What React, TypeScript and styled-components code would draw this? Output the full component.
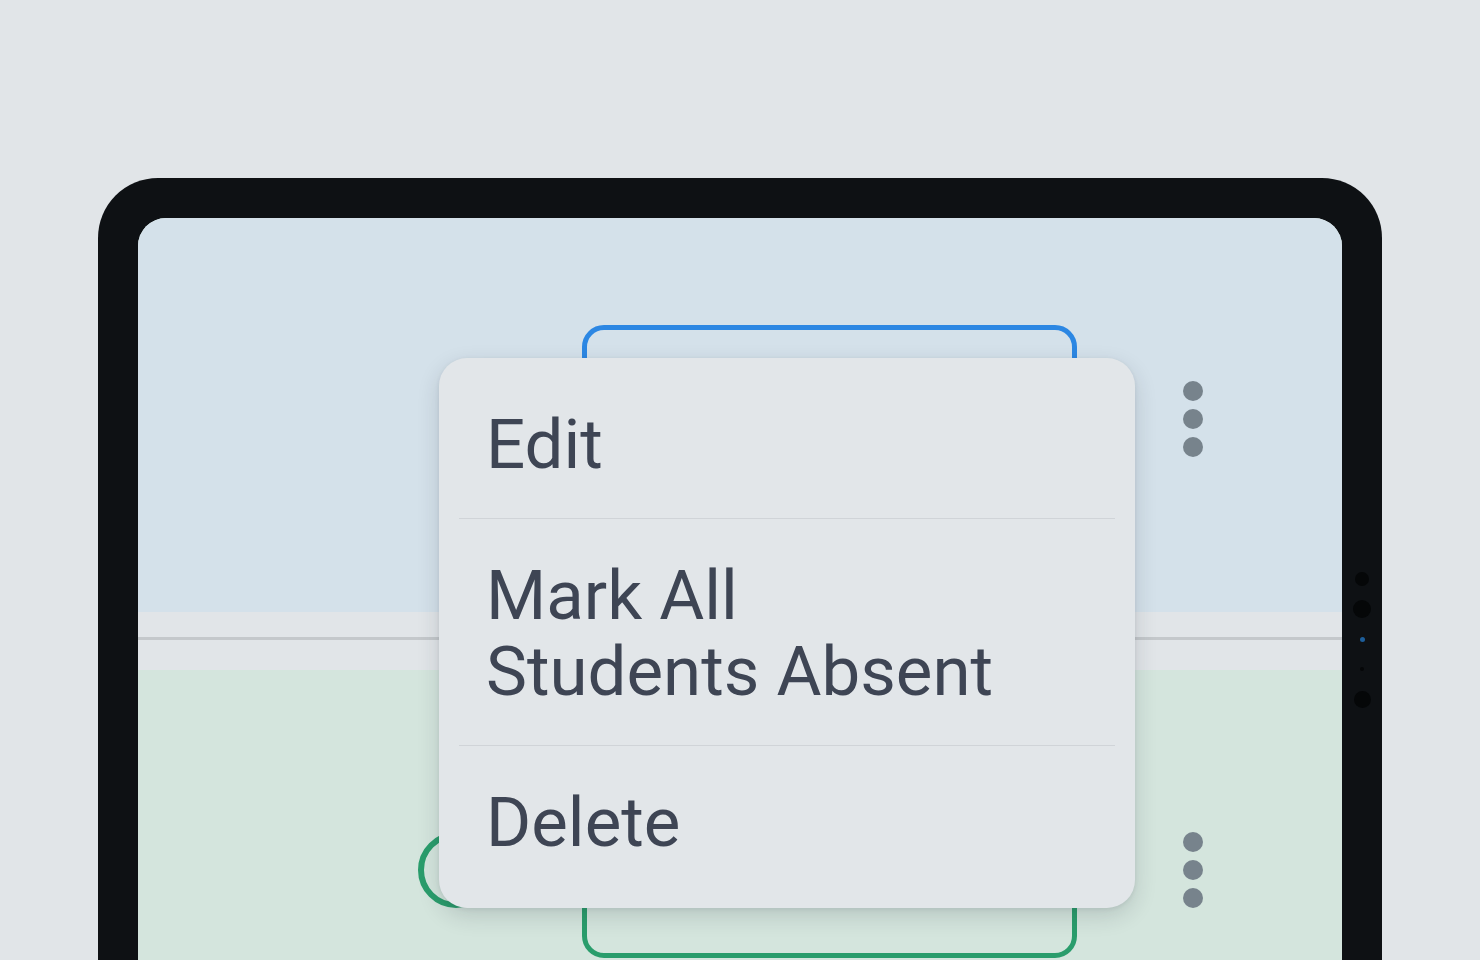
import styled, {createGlobalStyle} from "styled-components";

const GlobalStyle = createGlobalStyle`
  html, body {
    margin: 0;
    padding: 0;
    background: #e1e5e8;
    overflow: hidden;
  }

  body {
    font-family: Roboto, "Liberation Sans", sans-serif;
  }
`;

const menuItems = [["Edit"], ["Mark All", "Students Absent"], ["Delete"]];

export default function App() {
  return (
    <>
      <GlobalStyle />
      <Page>
        <Device>
          <Screen>
            <TopRow>
              <OutlineBox $color="#2c87e3" />
              <Kebab>
                <Dot />
                <Dot />
                <Dot />
              </Kebab>
            </TopRow>
            <Band>
              <BandLine />
            </Band>
            <BottomRow>
              <Ring />
              <OutlineBox $color="#2a9d6c" $gap={88} $top={108} />
              <Kebab $top={162}>
                <Dot />
                <Dot />
                <Dot />
              </Kebab>
            </BottomRow>

            <Menu>
              {menuItems.map((lines, i) => (
                <div key={i}>
                  {i > 0 && <Divider />}
                  <MenuItem>
                    {lines.map((line) => (
                      <span key={line}>{line}</span>
                    ))}
                  </MenuItem>
                </div>
              ))}
            </Menu>
          </Screen>

          <Sensors>
            <Sensor $size={14} />
            <Sensor $size={18} />
            <Sensor $size={5} $color="#1d5e9a" />
            <Sensor $size={4} />
            <Sensor $size={17} />
          </Sensors>
        </Device>
      </Page>
    </>
  );
}

const Page = styled.div`
  width: 1480px;
  height: 960px;
  box-sizing: border-box;
  padding: 178px 98px 0;
  overflow: hidden;
`;

const Device = styled.div`
  display: grid;
  grid-template-columns: 1fr 40px;
  height: 900px;
  padding: 40px 0 0 40px;
  background: #0e1114;
  border-radius: 60px 60px 0 0;
`;

const Screen = styled.div`
  position: relative;
  display: flex;
  flex-direction: column;
  border-radius: 28px 28px 0 0;
  overflow: hidden;
  background: #d4e5dd;
`;

const TopRow = styled.div`
  display: flex;
  align-items: flex-start;
  height: 394px;
  box-sizing: border-box;
  padding: 107px 0 0 444px;
  background: #d4e1ea;
`;

const Band = styled.div`
  height: 58px;
  box-sizing: border-box;
  padding-top: 25px;
  background: #e1e5e8;
`;

const BandLine = styled.div`
  height: 3px;
  background: #c4c8cb;
`;

const BottomRow = styled.div`
  display: flex;
  align-items: flex-start;
  height: 320px;
  padding-left: 280px;
  background: #d4e5dd;
`;

const OutlineBox = styled.div<{$color: string; $gap?: number; $top?: number}>`
  width: 495px;
  height: 180px;
  box-sizing: border-box;
  margin-left: ${(p) => p.$gap ?? 0}px;
  margin-top: ${(p) => p.$top ?? 0}px;
  border: 5px solid ${(p) => p.$color};
  border-radius: 22px;
`;

const Ring = styled.div`
  width: 76px;
  height: 76px;
  box-sizing: border-box;
  margin-top: 162px;
  border: 6px solid #2a9d6c;
  border-radius: 50%;
`;

const Kebab = styled.div<{$top?: number}>`
  display: flex;
  flex-direction: column;
  gap: 8px;
  margin-left: 106px;
  margin-top: ${(p) => p.$top ?? 56}px;
`;

const Dot = styled.span`
  width: 20px;
  height: 20px;
  border-radius: 50%;
  background: #77838c;
`;

const Menu = styled.div`
  position: absolute;
  left: 301px;
  top: 140px;
  width: 696px;
  padding: 10px 0 12px;
  background: #e2e6e9;
  border-radius: 28px;
  box-shadow: 0 8px 22px rgba(30, 40, 50, 0.16), 0 1px 4px rgba(30, 40, 50, 0.08);
`;

const MenuItem = styled.div`
  display: flex;
  flex-direction: column;
  padding: 39px 47px 35px;
  font-family: Roboto, "Liberation Sans", sans-serif;
  font-size: 69px;
  line-height: 76px;
  color: #3e4554;
`;

const Divider = styled.div`
  height: 1px;
  margin: 0 20px;
  background: #d0d4d8;
`;

const Sensors = styled.div`
  display: flex;
  flex-direction: column;
  align-items: center;
  padding-top: 346px;
`;

const Sensor = styled.span<{$size: number; $color?: string}>`
  display: block;
  width: ${(p) => p.$size}px;
  height: ${(p) => p.$size}px;
  margin: ${(p) => (30 - p.$size) / 2}px 0;
  border-radius: 50%;
  background: ${(p) => p.$color ?? "#050708"};
`;
